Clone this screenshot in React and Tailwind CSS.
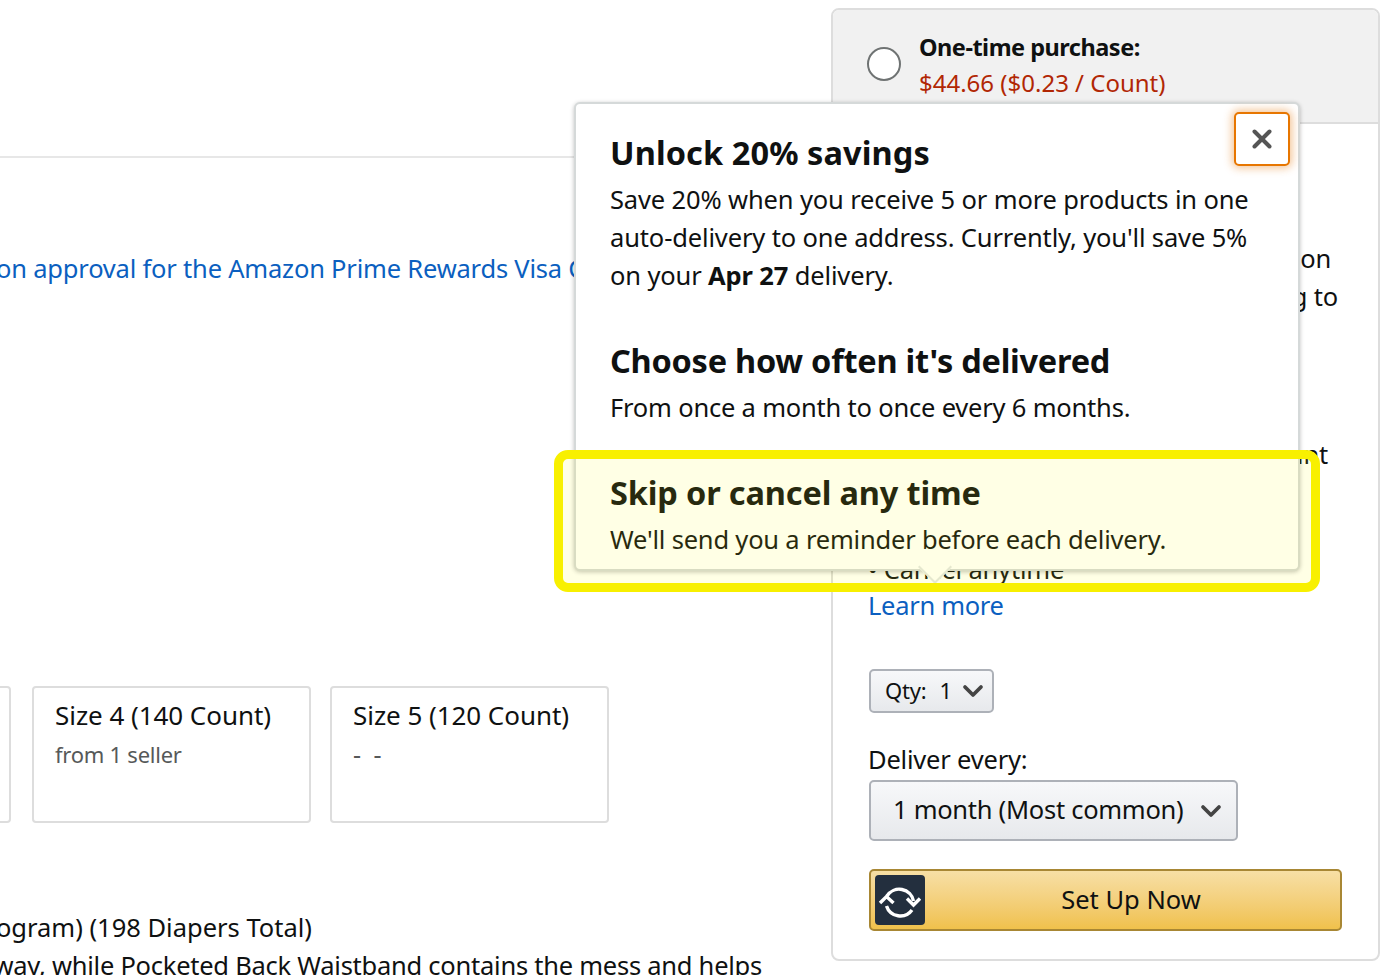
import { ChevronDown, X } from "lucide-react";

const font = { fontFamily: '"Noto Sans", sans-serif' };

function RepeatIcon() {
  return (
    <svg viewBox="0 0 50 50" className="w-[50px] h-[50px]" fill="none" stroke="#fff" strokeWidth="3.4">
      <path d="M12 21 A14.500 14.500 0 0 1 38.500 26" />
      <path d="M37 35 A14.500 14.500 0 0 1 11.500 31" />
      <path d="M32 23.500 L38.500 30 L45 23.500" />
      <path d="M5 28 L11.500 21.500 L18.500 28" />
    </svg>
  );
}

function SizeCard({ title, sub, subClass }) {
  return (
    <div className="w-[279px] h-[137px] shrink-0 border-2 border-[#dddddd] rounded-[4px] pl-[21px] pt-[9px]">
      <div className="text-[26px] leading-[36px] tracking-[-0.05px] text-[#0f1111]">{title}</div>
      <div className={`leading-[32px] mt-[5px] text-[#565959] ${subClass}`}>{sub}</div>
    </div>
  );
}

function LeftColumn() {
  return (
    <div className="w-[831px] shrink-0 pt-[156px] text-[25.5px] tracking-[-0.2px]">
      <div className="border-t-2 border-[#e7e7e7] w-[600px]" />
      <div className="mt-[92px] ml-[-35px] whitespace-nowrap leading-[36px] text-[#0b5fc0]">
        upon approval for the Amazon Prime Rewards Visa Card
      </div>
      <div className="flex mt-[400px] ml-[-268px] gap-[19px]">
        <div className="w-[279px] h-[137px] mr-[2px] shrink-0 border-2 border-[#dddddd] rounded-[4px]" />
        <SizeCard title="Size 4 (140 Count)" sub="from 1 seller" subClass="text-[22px] tracking-[-0.25px]" />
        <SizeCard title="Size 5 (120 Count)" sub="- -" subClass="text-[25px] tracking-[3px]" />
      </div>
      <div className="mt-[85px] w-[312px] flex justify-end whitespace-nowrap leading-[38px] tracking-[0px] text-[#0f1111]">
        Subscribe &amp; Save Program) (198 Diapers Total)
      </div>
      <div className="w-[762px] flex justify-end whitespace-nowrap leading-[38px] tracking-[-0.25px] text-[#0f1111]">
        Keeps wetness away, while Pocketed Back Waistband contains the mess and helps
      </div>
    </div>
  );
}

function BuyBox() {
  return (
    <div className="w-[549px] h-[953px] mt-[8px] shrink-0 border-2 border-[#dddddd] rounded-[8px] overflow-hidden">
      <div className="h-[114px] bg-[#f1f1f1] border-b-2 border-[#dddddd] flex pl-[34px] pt-[19px]">
        <div className="w-[34px] h-[34px] mt-[18px] rounded-full border-2 border-[#6f7373] bg-white shrink-0" />
        <div className="ml-[18px]">
          <div className="text-[23.5px] tracking-[-0.5px] leading-[36px] font-bold text-[#0f1111]">One-time purchase:</div>
          <div className="text-[24px] leading-[36px] text-[#b12704]">$44.66 ($0.23 / Count)</div>
        </div>
      </div>
      <div className="pl-[35px] pt-[115px] text-[25.5px] tracking-[-0.2px] leading-[38px] text-[#0f1111]">
        <div className="w-[463px] flex justify-end whitespace-nowrap">Save 5% on</div>
        <div className="w-[470px] flex justify-end whitespace-nowrap">shipping to</div>
        <div className="w-[460px] mt-[120px] flex justify-end whitespace-nowrap">Discount</div>
        <div className="mt-[77px] whitespace-nowrap">• Cancel anytime</div>
        <div className="mt-[-2px] text-[#0b5fc0] tracking-[-0.3px]">Learn more</div>
        <div className="mt-[45px] ml-[1px] w-[125px] h-[44px] border-2 border-[#adb1b8] rounded-[5px] bg-gradient-to-b from-[#f7f8fa] to-[#e7e9ec] flex items-center pl-[14px] text-[22px]">
          <span className="pb-[2px]">Qty:</span>
          <span className="pb-[2px] ml-[13px]">1</span>
          <ChevronDown className="ml-[5px] text-[#444] w-[32px] h-[32px]" strokeWidth={2.8} />
        </div>
        <div className="mt-[27px]">Deliver every:</div>
        <div className="mt-[2px] ml-[1px] w-[369px] h-[61px] border-2 border-[#adb1b8] rounded-[5px] bg-gradient-to-b from-[#f7f8fa] to-[#e7e9ec] flex items-center pl-[22px]">
          <span className="pb-[4px] tracking-[-0.28px]">1 month (Most common)</span>
          <ChevronDown className="ml-auto mr-[9px] text-[#444] w-[32px] h-[32px]" strokeWidth={2.8} />
        </div>
        <div className="mt-[28px] ml-[1px] w-[473px] h-[62px] border-2 border-[#a88734] rounded-[5px] bg-gradient-to-b from-[#f7dfa5] to-[#f0c14b] flex items-center pl-[4px]">
          <div className="w-[50px] h-[50px] bg-[#232f3e] rounded-[4px] shrink-0">
            <RepeatIcon />
          </div>
          <div className="flex-1 text-center tracking-[0px] pb-[2px] pr-[3px]">Set Up Now</div>
        </div>
      </div>
    </div>
  );
}

function Popover() {
  return (
    <div className="absolute left-[574px] top-[102px] w-[726px] h-[469px] bg-white border-2 border-[#d5d9d9] rounded-[6px] shadow-[0_1px_4px_rgba(0,0,0,0.25)] pl-[34px] pt-[25px] text-[#0f1111]">
      <button className="absolute right-[8px] top-[8px] w-[56px] h-[54px] border-2 border-[#e77600] rounded-[5px] bg-white shadow-[0_0_8px_2px_rgba(228,121,17,0.45)] flex items-center justify-center">
        <X className="w-[30px] h-[30px] text-[#555]" strokeWidth={3.2} />
      </button>
      <div className="text-[32.5px] tracking-[0.1px] leading-[48px] font-bold">Unlock 20% savings</div>
      <div className="text-[25.5px] tracking-[-0.14px] leading-[38px] mt-[3px]">
        <div>Save 20% when you receive 5 or more products in one</div>
        <div>auto-delivery to one address. Currently, you'll save 5%</div>
        <div>
          on your <b>Apr 27</b> delivery.
        </div>
      </div>
      <div className="text-[32.5px] tracking-[-0.25px] leading-[48px] font-bold mt-[43px]">Choose how often it's delivered</div>
      <div className="text-[25.5px] tracking-[-0.2px] leading-[38px] mt-[3px]">From once a month to once every 6 months.</div>
      <div className="text-[32.5px] tracking-[-0.15px] leading-[48px] font-bold mt-[43px]">Skip or cancel any time</div>
      <div className="text-[25.5px] tracking-[-0.2px] leading-[38px] mt-[3px]">We'll send you a reminder before each delivery.</div>
      <div className="absolute left-[347px] bottom-[-10px] w-[24px] h-[24px] rotate-45 bg-white border-r-2 border-b-2 border-[#e3e6e6]" />
    </div>
  );
}

export default function App() {
  return (
    <div className="relative w-[1387px] h-[975px] overflow-hidden bg-white flex" style={font}>
      <LeftColumn />
      <BuyBox />
      <Popover />
      <div className="absolute left-[554px] top-[450px] w-[766px] h-[142px] border-[9px] border-[#f8f000] rounded-[14px] bg-[#ffff00]/10" />
    </div>
  );
}
